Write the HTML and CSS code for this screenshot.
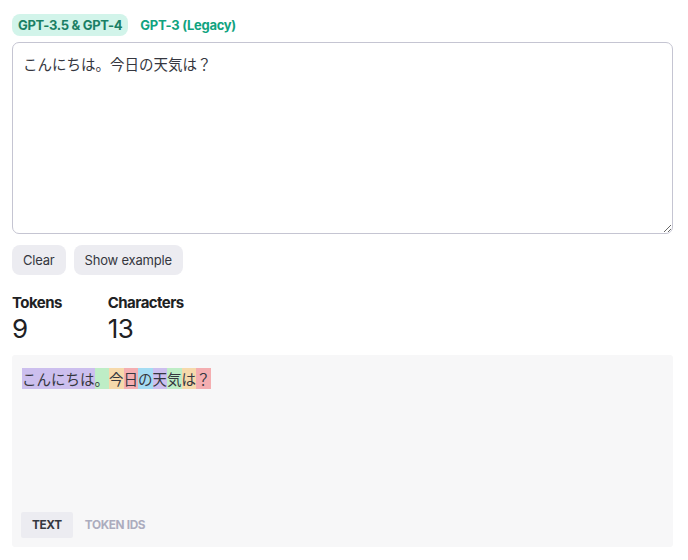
FILE: index.html
```html
<!DOCTYPE html>
<html lang="ja">
<head>
<meta charset="utf-8">
<link rel="stylesheet" href="styles.css">
</head>
<body>
<div class="page">
  <div class="tabs">
    <span class="tab active">GPT-3.5 &amp; GPT-4</span>
    <span class="tab">GPT-3 (Legacy)</span>
  </div>
  <textarea class="input">こんにちは。今日の天気は？</textarea>
  <div class="buttons">
    <button class="btn">Clear</button>
    <button class="btn">Show example</button>
  </div>
  <div class="stats">
    <div class="stat">
      <div class="stat-label">Tokens</div>
      <div class="stat-value">9</div>
    </div>
    <div class="stat">
      <div class="stat-label">Characters</div>
      <div class="stat-value">13</div>
    </div>
  </div>
  <div class="output">
    <div class="tokens"><span class="t purple">こんにちは</span><span class="t green">。</span><span class="t orange">今</span><span class="t red">日</span><span class="t blue">の</span><span class="t purple">天</span><span class="t green">気</span><span class="t orange">は</span><span class="t red">？</span></div>
    <div class="view-tabs">
      <span class="view-tab active">TEXT</span>
      <span class="view-tab">TOKEN IDS</span>
    </div>
  </div>
</div>
</body>
</html>
```

FILE: styles.css
```css
* { box-sizing: border-box; }
html, body { margin: 0; padding: 0; background: #fff; }
body {
  font-family: Inter, "Noto Sans", "Noto Sans CJK JP", sans-serif;
  color: #202123;
}
.page {
  width: 661px;
  margin-left: 12px;
  padding-top: 14px;
}
.tabs {
  display: flex;
  height: 22px;
}
.tab {
  display: flex;
  align-items: center;
  padding: 0 6px;
  border-radius: 8px;
  font-size: 13px;
  font-weight: 700;
  letter-spacing: -0.3px;
  color: #10a37f;
}
.tab + .tab { margin-left: 6px; }
.tab.active {
  background: #d2f4ea;
  color: #1a7f64;
}
.input {
  display: block;
  margin-top: 6px;
  width: 661px;
  height: 192px;
  border: 1px solid #c5c5d2;
  border-radius: 7px;
  padding: 11px 10px;
  font-family: "Noto Sans CJK JP", sans-serif;
  font-size: 14.5px;
  line-height: 20px;
  color: #353740;
  resize: vertical;
  outline: none;
}
.buttons {
  display: flex;
  gap: 8px;
  margin-top: 11px;
}
.btn {
  height: 30px;
  padding: 0 11px;
  border: none;
  border-radius: 8px;
  background: #ececf1;
  color: #353740;
  font-family: Inter, sans-serif;
  font-size: 13px;
  letter-spacing: -0.2px;
}
.stats {
  display: flex;
  gap: 46px;
  margin-top: 19px;
}
.stat-label {
  font-size: 15px;
  font-weight: 700;
  letter-spacing: -0.55px;
  line-height: 18px;
}
.stat-value {
  font-size: 26px;
  line-height: 34px;
  font-weight: 400;
  letter-spacing: -0.5px;
}
.output {
  margin-top: 9px;
  height: 192px;
  background: #f7f7f8;
  border-radius: 3px;
  padding: 14px 11px 9px 9px;
  display: flex;
  flex-direction: column;
  justify-content: space-between;
}
.tokens {
  font-family: "Noto Sans CJK JP", sans-serif;
  font-size: 14.5px;
  line-height: 20px;
  color: #353740;
  padding-left: 1px;
}
.purple { background: rgba(107, 64, 216, 0.3); }
.green { background: rgba(104, 222, 122, 0.4); }
.orange { background: rgba(244, 172, 54, 0.4); }
.red { background: rgba(239, 65, 70, 0.4); }
.blue { background: rgba(39, 181, 234, 0.4); }
.view-tabs {
  display: flex;
  gap: 1px;
}
.view-tab {
  display: flex;
  align-items: center;
  height: 26px;
  padding: 0 11px;
  border-radius: 2px;
  font-size: 11.8px;
  font-weight: 700;
  letter-spacing: -0.35px;
  color: #acacbe;
}
.view-tab.active {
  background: #ececf1;
  color: #353740;
}
```
